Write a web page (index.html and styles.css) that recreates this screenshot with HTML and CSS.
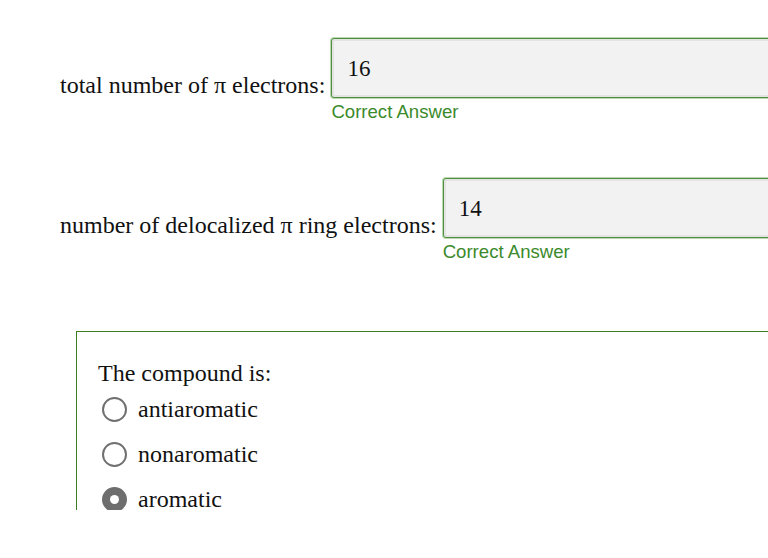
FILE: index.html
```html
<!DOCTYPE html>
<html>
<head>
<meta charset="utf-8">
<link rel="stylesheet" href="styles.css">
</head>
<body>
<div class="page">
  <div class="q q1">
    <span class="label">total number of π electrons:</span>
    <div class="answer">
      <div class="field">16</div>
      <div class="feedback">Correct Answer</div>
    </div>
  </div>
  <div class="q q2">
    <span class="label">number of delocalized π ring electrons:</span>
    <div class="answer">
      <div class="field">14</div>
      <div class="feedback">Correct Answer</div>
    </div>
  </div>
  <div class="choice-box">
    <div class="prompt">The compound is:</div>
    <div class="option"><span class="radio"></span><span class="opt-text">antiaromatic</span></div>
    <div class="option"><span class="radio"></span><span class="opt-text">nonaromatic</span></div>
    <div class="option"><span class="radio checked"></span><span class="opt-text">aromatic</span></div>
  </div>
</div>
</body>
</html>
```

FILE: styles.css
```css
html, body {
  margin: 0;
  padding: 0;
  background: #ffffff;
}
.page {
  height: 510px;
  overflow: hidden;
  font-family: "Liberation Serif", "Times New Roman", serif;
  color: #111;
}
.q {
  display: flex;
  align-items: flex-start;
  padding-left: 60px;
}
.q1 { padding-top: 38px; }
.q2 { padding-top: 55px; }
.label {
  font-size: 24px;
  line-height: 27px;
  padding-top: 34px;
  margin-right: 6px;
  white-space: nowrap;
}
.answer {
  display: flex;
  flex-direction: column;
}
.field {
  box-sizing: border-box;
  width: 600px;
  height: 60px;
  border: 1px solid #4f8f3f;
  box-shadow: 0 0 0 1px #b9d8b0, inset 0 0 0 2px #e4e4e4;
  border-radius: 3px;
  background: #f2f2f2;
  font-family: "Liberation Serif", "Times New Roman", serif;
  font-size: 23px;
  padding-left: 15px;
  padding-top: 1px;
  display: flex;
  align-items: center;
}
.feedback {
  font-family: "Liberation Sans", Arial, sans-serif;
  font-size: 18.6px;
  line-height: 22px;
  color: #3b8a2b;
  margin-top: 3px;
}
.choice-box {
  margin-left: 76px;
  margin-top: 68px;
  border: 1px solid #3a7d22;
  border-right: none;
  padding: 28px 0 40px 21px;
}
.prompt {
  font-size: 24px;
  line-height: 27px;
}
.option {
  display: flex;
  align-items: center;
  height: 45px;
}
.radio {
  box-sizing: border-box;
  width: 25px;
  height: 25px;
  border: 2px solid #707070;
  border-radius: 50%;
  margin-left: 4px;
  margin-right: 11px;
  display: flex;
  align-items: center;
  justify-content: center;
  background: #fff;
}
.radio.checked {
  background: #6e6e6e;
  border-color: #6e6e6e;
}
.radio.checked::after {
  content: "";
  width: 9px;
  height: 9px;
  border-radius: 50%;
  background: #fff;
}
.opt-text {
  font-size: 24px;
  line-height: 27px;
}
```
